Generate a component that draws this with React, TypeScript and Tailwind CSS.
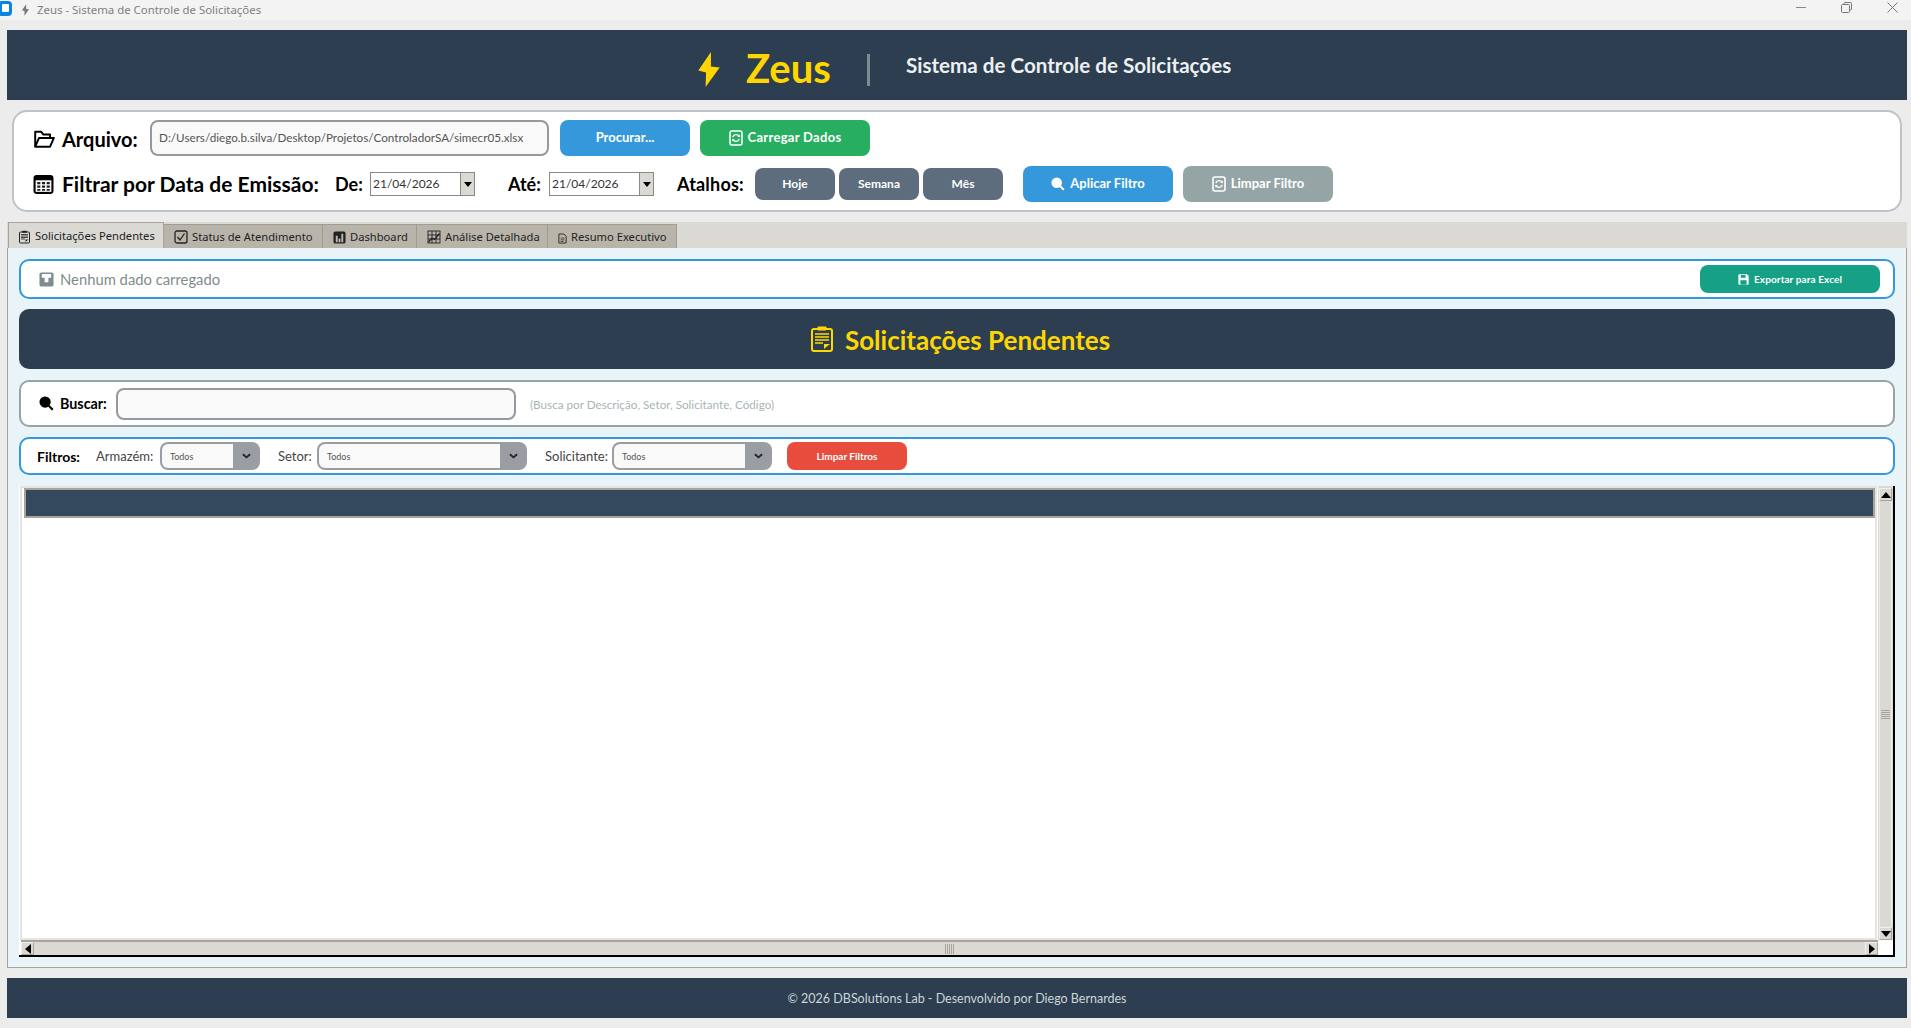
import React from "react";

const ui = "font-['Lato','Noto_Sans',sans-serif]";

type IconProps = { className?: string };

const Bolt: React.FC<IconProps> = ({ className }) => (
  <svg viewBox="0 0 22 36" className={className} fill="currentColor">
    <path d="M13 0 L0 19 L8 21 L7.5 36 L22 16 L13 15 Z" />
  </svg>
);

const FolderOpen: React.FC<IconProps> = ({ className }) => (
  <svg viewBox="0 0 20 20" className={className} fill="none" stroke="currentColor" strokeWidth="1.8" strokeLinejoin="round">
    <path d="M2 17 V3.5 H7.5 L9.5 6 H15.5 V9" />
    <path d="M2 17 L5.5 9 H19 L15.5 17 Z" />
  </svg>
);

const CalendarIcon: React.FC<IconProps> = ({ className }) => (
  <svg viewBox="0 0 20 20" className={className}>
    <rect x="0.5" y="1" width="19" height="18" rx="3" fill="#000" />
    <rect x="2.5" y="6" width="15" height="11" fill="#fff" />
    <path d="M4 7.5h3v2.2h-3zM8.5 7.5h3v2.2h-3zM13 7.5h3v2.2h-3zM4 11h3v2.2h-3zM8.5 11h3v2.2h-3zM13 11h3v2.2h-3zM4 14.4h3v1.6h-3zM8.5 14.4h3v1.6h-3zM13 14.4h3v1.6h-3z" fill="#222" />
  </svg>
);

const Magnifier: React.FC<IconProps> = ({ className }) => (
  <svg viewBox="0 0 16 16" className={className} fill="currentColor">
    <circle cx="6.5" cy="6.5" r="6" />
    <path d="M9.5 11 L11 9.5 L15.5 13.8 L13.8 15.5 Z" />
  </svg>
);

// gray variant of the floppy: a white T on a rounded square
const FloppyT: React.FC<IconProps> = ({ className }) => (
  <svg viewBox="0 0 16 16" className={className}>
    <rect x="0.5" y="0.5" width="15" height="15" rx="2" fill="currentColor" />
    <path d="M3 2 H13 V6 H10 V11 H6 V6 H3 Z" fill="#fff" />
  </svg>
);

const FloppySave: React.FC<IconProps & { hole: string }> = ({ className, hole }) => (
  <svg viewBox="0 0 16 16" className={className}>
    <path d="M1.5 0.5 H13 L15.5 3 V14 A1.5 1.5 0 0 1 14 15.5 H2 A1.5 1.5 0 0 1 0.5 14 V2 A1.5 1.5 0 0 1 1.5 0.5 Z" fill="currentColor" />
    <rect x="4" y="1.5" width="7" height="4" fill={hole} />
    <rect x="3.5" y="9" width="9" height="6.5" fill={hole} />
  </svg>
);

const RefreshDoc: React.FC<IconProps> = ({ className }) => (
  <svg viewBox="0 0 14 16" className={className}>
    <rect x="1" y="1" width="12" height="14" rx="2" fill="none" stroke="currentColor" strokeWidth="1.6" />
    <path d="M3.8 7.2 A3.3 3.3 0 0 1 10 6.5 M10.2 8.8 A3.3 3.3 0 0 1 4 9.5" fill="none" stroke="currentColor" strokeWidth="1.4" />
    <path d="M10.8 4.4 V7 H8.3 Z M3.2 11.6 V9 H5.7 Z" fill="currentColor" />
  </svg>
);

const Clipboard: React.FC<IconProps> = ({ className }) => (
  <svg viewBox="0 0 22 26" className={className} fill="none" stroke="currentColor">
    <rect x="1" y="3" width="20" height="22" rx="2" strokeWidth="2" />
    <rect x="6.5" y="0.5" width="9" height="4" rx="1" fill="currentColor" stroke="none" />
    <path d="M4 8h14M4 11h14M4 14h14M4 17h8" strokeWidth="1.6" />
    <path d="M13 23 V18 H19 Z" fill="currentColor" stroke="none" />
  </svg>
);

const CheckBox: React.FC<IconProps> = ({ className }) => (
  <svg viewBox="0 0 14 14" className={className} fill="none" stroke="currentColor" strokeWidth="1.3">
    <rect x="1" y="1" width="12" height="12" rx="2" />
    <path d="M3.5 7 L6 10 L10.5 3.5" />
  </svg>
);

const BarsIcon: React.FC<IconProps> = ({ className }) => (
  <svg viewBox="0 0 14 14" className={className}>
    <rect x="0.5" y="0.5" width="13" height="13" rx="2" fill="currentColor" />
    <path d="M3 5h2v7h-2zM6 8h2v4h-2zM9 3h2v9h-2z" fill="#bfbcb2" />
  </svg>
);

const ChartIcon: React.FC<IconProps> = ({ className }) => (
  <svg viewBox="0 0 14 14" className={className} fill="none" stroke="currentColor" strokeWidth="0.9">
    <rect x="1" y="1" width="12" height="12" />
    <path d="M1 5h12M1 9h12M5 1v12M9 1v12" />
    <path d="M1.5 12 L5 8 L7.5 9.5 L12.5 3.5" strokeWidth="1.3" />
  </svg>
);

const DocIcon: React.FC<IconProps> = ({ className }) => (
  <svg viewBox="0 0 10 12" className={className} fill="none" stroke="currentColor" strokeWidth="1">
    <path d="M1 1 H6.5 L9 3.5 V11 H1 Z" />
    <path d="M3 5.5h4M3 7.5h4M3 9.2h3" strokeWidth="0.8" />
  </svg>
);

const Chevron: React.FC = () => (
  <svg viewBox="0 0 10 6" className="w-[9px] h-[6px] text-[#222]" fill="none" stroke="currentColor" strokeWidth="2">
    <path d="M1 1 L5 4.5 L9 1" />
  </svg>
);

const Action: React.FC<{ w: string; h: string; bg: string; children: React.ReactNode; extra?: string }> = ({ w, h, bg, children, extra }) => (
  <div className={`${w} ${h} ${bg} ${extra ?? ""} rounded-lg flex items-center justify-center gap-[5px] text-white shrink-0 whitespace-nowrap`}>
    {children}
  </div>
);

const DateBox: React.FC<{ extra: string }> = ({ extra }) => (
  <div className={`${extra} w-[105px] h-[24px] border border-[#8a8a84] bg-white flex shrink-0`}>
    <div className="flex-1 pl-[2px] flex items-center text-[12px] text-[#333]">21/04/2026</div>
    <div className="w-[14px] bg-[#dad9d4] border-l border-[#8a8a84] flex items-center justify-center">
      <div className="w-0 h-0 border-x-[4px] border-x-transparent border-t-[5px] border-t-black" />
    </div>
  </div>
);

const Combo: React.FC<{ w: string }> = ({ w }) => (
  <div className={`${w} h-[28px] rounded-lg bg-[#9a9da3] p-[2px] pr-0 flex shrink-0`}>
    <div className="flex-1 bg-[#f9f9f9] rounded-l-md pl-[8px] pt-[2px] flex items-center text-[9px] text-[#555]">Todos</div>
    <div className="w-[27px] flex items-center justify-center">
      <Chevron />
    </div>
  </div>
);

const tabs = [
  { label: "Status de Atendimento", w: "w-[159px]", icon: <CheckBox className="w-[14px] h-[14px]" /> },
  { label: "Dashboard", w: "w-[94px]", icon: <BarsIcon className="w-[13px] h-[13px]" /> },
  { label: "Análise Detalhada", w: "w-[131px]", icon: <ChartIcon className="w-[14px] h-[14px]" /> },
  { label: "Resumo Executivo", w: "w-[129px]", icon: <DocIcon className="w-[9px] h-[11px] mt-[2px]" /> },
];

const Arrow: React.FC<{ dir: "up" | "down" | "left" | "right" }> = ({ dir }) => {
  const tri =
    dir === "up"
      ? "border-x-[5px] border-x-transparent border-b-[6px] border-b-black"
      : dir === "down"
        ? "border-x-[5px] border-x-transparent border-t-[6px] border-t-black"
        : dir === "left"
          ? "border-y-[5px] border-y-transparent border-r-[6px] border-r-black"
          : "border-y-[5px] border-y-transparent border-l-[6px] border-l-black";
  return (
    <div className="w-[13px] h-[13px] bg-[#dad9d4] border border-[#a8a49a] border-t-[#f2f1ee] border-l-[#f2f1ee] flex items-center justify-center shrink-0">
      <div className={`w-0 h-0 ${tri}`} />
    </div>
  );
};

export default function App() {
  return (
    <div className={`w-full h-screen overflow-hidden bg-[#ececec] flex flex-col ${ui}`}>
      {/* title bar */}
      <div className="h-5 bg-[#f3f3f3] flex items-center shrink-0 font-['Noto_Sans',sans-serif]">
        <div className="w-[14px] h-[15px] -ml-[2px] mt-[-4px] bg-[#0a84e0] rounded-[4px] flex items-center justify-center shrink-0">
          <div className="w-[7px] h-[8px] bg-white rounded-[1px]" />
        </div>
        <Bolt className="w-[7px] h-[12px] ml-[10px] text-[#777] shrink-0" />
        <span className="ml-[8px] text-[11.4px] text-[#808080] whitespace-nowrap">Zeus - Sistema de Controle de Solicitações</span>
        <div className="ml-auto flex items-start h-full text-[#777]">
          <div className="w-[10px] h-px bg-[#888] mt-[7px]" />
          <svg viewBox="0 0 11 11" className="w-[11px] h-[11px] ml-[35px] mt-[2px]" fill="none" stroke="currentColor">
            <rect x="0.5" y="2.5" width="8" height="8" rx="1" />
            <path d="M3 2.5 V1.5 A1 1 0 0 1 4 0.5 H9.5 A1 1 0 0 1 10.5 1.5 V7 A1 1 0 0 1 9.5 8 H8.5" />
          </svg>
          <svg viewBox="0 0 11 11" className="w-[11px] h-[11px] ml-[35px] mr-[13px] mt-[2px]" fill="none" stroke="currentColor">
            <path d="M0.5 0.5 L10.5 10.5 M10.5 0.5 L0.5 10.5" />
          </svg>
        </div>
      </div>

      {/* app header */}
      <div className="mt-[10px] ml-[7px] mr-[4px] h-[70px] bg-[#2c3e50] flex items-center pl-[691px] shrink-0">
        <Bolt className="w-[22px] h-[35px] text-[#ffd700] shrink-0 mt-[9px]" />
        <span className="ml-[26px] w-[121px] text-[40px] leading-none font-bold text-[#ffd700] mt-[5px]">Zeus</span>
        <div className="w-[3px] h-[32px] bg-[#7f8c8d] shrink-0 mt-[9px]" />
        <span className="ml-[36px] text-[20.6px] font-bold text-[#ecf0f1] whitespace-nowrap mt-[1px]">Sistema de Controle de Solicitações</span>
      </div>

      {/* file and date filter panel */}
      <div className="mt-[10px] ml-[12px] mr-[9px] h-[102px] border-2 border-[#bdc3c7] rounded-[15px] bg-white pt-[8px] pl-[19px] flex flex-col gap-[10px] shrink-0">
        <div className="h-[36px] flex items-center">
          <FolderOpen className="w-[22px] h-[22px] text-black shrink-0 mt-[2px]" />
          <span className="ml-[7px] w-[88px] text-[20px] font-bold text-black mt-[2px]">Arquivo:</span>
          <div className="w-[399px] h-[36px] border-2 border-[#95989e] rounded-lg bg-[#f9f9f9] flex items-center pl-[7px] text-[11.7px] text-[#555] whitespace-nowrap shrink-0">
            D:/Users/diego.b.silva/Desktop/Projetos/ControladorSA/simecr05.xlsx
          </div>
          <Action w="w-[130px]" h="h-[36px]" bg="bg-[#3498db]" extra="ml-[11px] text-[13px] font-bold">Procurar...</Action>
          <Action w="w-[170px]" h="h-[36px]" bg="bg-[#27ae60]" extra="ml-[10px] text-[13px] font-bold tracking-[0.3px]">
            <RefreshDoc className="w-[14px] h-[16px]" />
            Carregar Dados
          </Action>
        </div>
        <div className="h-[36px] flex items-center">
          <CalendarIcon className="w-[21px] h-[21px] shrink-0" />
          <span className="ml-[8px] w-[258px] text-[21px] font-bold text-black whitespace-nowrap">Filtrar por Data de Emissão:</span>
          <span className="ml-[15px] w-[27px] text-[18px] font-bold text-black">De:</span>
          <DateBox extra="ml-[8px]" />
          <span className="ml-[33px] w-[32px] text-[18px] font-bold text-black">Até:</span>
          <DateBox extra="ml-[9px]" />
          <span className="ml-[23px] w-[68px] text-[18px] font-bold text-black tracking-[0.2px]">Atalhos:</span>
          <div className="ml-[10px] flex gap-[4px]">
            <Action w="w-[80px]" h="h-[32px]" bg="bg-[#5d6d7e]" extra="text-[12px] font-bold">Hoje</Action>
            <Action w="w-[80px]" h="h-[32px]" bg="bg-[#5d6d7e]" extra="text-[12px] font-bold">Semana</Action>
            <Action w="w-[80px]" h="h-[32px]" bg="bg-[#5d6d7e]" extra="text-[12px] font-bold">Mês</Action>
          </div>
          <Action w="w-[150px]" h="h-[36px]" bg="bg-[#3498db]" extra="ml-[20px] text-[13px] font-bold">
            <Magnifier className="w-[14px] h-[14px]" />
            Aplicar Filtro
          </Action>
          <Action w="w-[150px]" h="h-[36px]" bg="bg-[#95a5a6]" extra="ml-[10px] text-[13px] font-bold">
            <RefreshDoc className="w-[14px] h-[16px]" />
            Limpar Filtro
          </Action>
        </div>
      </div>

      {/* notebook */}
      <div className="mt-[10px] ml-[7px] mr-[4px] flex flex-col shrink-0">
        <div className="h-[26px] bg-[#dad9d4] flex items-end font-['Noto_Sans',sans-serif] text-[11.2px] text-[#222]">
          <div className="w-[156px] ml-px h-[26px] pt-[2px] bg-[#dad9d4] border border-b-0 border-[#a8a49a] flex items-center pl-[10px] gap-[5px] whitespace-nowrap">
            <Clipboard className="w-[11px] h-[14px]" />
            Solicitações Pendentes
          </div>
          {tabs.map((t) => (
            <div key={t.label} className={`${t.w} h-[24px] pt-px bg-[#b8b4aa] border-t border-r border-[#a09c92] flex items-center pl-[10px] gap-[4px] whitespace-nowrap`}>
              {t.icon}
              {t.label}
            </div>
          ))}
        </div>
        <div className="h-[720px] border border-[#a8a49a] border-t-0 bg-[#e8f4f8] px-[11px] pt-[11px] flex flex-col">
          {/* status */}
          <div className="h-[40px] border-2 border-[#3498db] rounded-[10px] bg-white flex items-center pl-[18px] pr-[13px] shrink-0">
            <FloppyT className="w-[15px] h-[15px] text-[#7f8c8d]" />
            <span className="ml-[6px] text-[14.8px] text-[#7f8c8d] whitespace-nowrap">Nenhum dado carregado</span>
            <Action w="w-[180px]" h="h-[28px]" bg="bg-[#16a085]" extra="ml-auto text-[10px] font-bold tracking-[0.1px]">
              <FloppySave className="w-[11px] h-[11px] text-white" hole="#16a085" />
              Exportar para Excel
            </Action>
          </div>

          {/* banner */}
          <div className="mt-[10px] h-[60px] bg-[#2c3e50] rounded-[10px] flex items-center justify-center gap-[12px] pl-[7px] text-[#ffd700] shrink-0">
            <Clipboard className="w-[22px] h-[26px]" />
            <span className="text-[26px] font-bold leading-none whitespace-nowrap mt-[2px]">Solicitações Pendentes</span>
          </div>

          {/* search */}
          <div className="mt-[11px] h-[47px] border-2 border-[#95a5a6] rounded-[10px] bg-white flex items-center pl-[18px] shrink-0">
            <Magnifier className="w-[15px] h-[15px] text-black" />
            <span className="ml-[6px] text-[14.3px] font-bold text-black w-[56px]">Buscar:</span>
            <div className="w-[400px] h-[32px] border-2 border-[#95989e] rounded-lg bg-[#f9f9f9] shrink-0" />
            <span className="ml-[14px] text-[11.7px] text-[#a9b4b6] whitespace-nowrap mt-[2px]">(Busca por Descrição, Setor, Solicitante, Código)</span>
          </div>

          {/* filters */}
          <div className="mt-[10px] h-[38px] border-2 border-[#3498db] rounded-[10px] bg-white flex items-center pl-[16px] shrink-0">
            <span className="w-[59px] text-[14px] font-bold text-black">Filtros:</span>
            <span className="w-[64px] text-[13px] text-[#444] whitespace-nowrap mt-[2px]">Armazém:</span>
            <Combo w="w-[100px]" />
            <span className="ml-[18px] w-[39px] text-[13px] text-[#444] mt-[2px]">Setor:</span>
            <Combo w="w-[210px]" />
            <span className="ml-[18px] w-[67px] text-[13px] text-[#444] mt-[2px]">Solicitante:</span>
            <Combo w="w-[160px]" />
            <Action w="w-[120px]" h="h-[28px]" bg="bg-[#e74c3c]" extra="ml-[15px] text-[10px] font-bold">Limpar Filtros</Action>
          </div>

          {/* table */}
          <div className="mt-[11px] h-[471px] border-r-2 border-b-2 border-black bg-white flex flex-col shrink-0">
            <div className="h-[454px] flex">
              <div className="flex-1 border-2 border-[#e6e4de] flex flex-col ml-px mr-px">
                <div className="ml-[2px] h-[30px] border-2 border-[#a8a49a] bg-[#34495e] shrink-0" />
              </div>
              <div className="w-[15px] pt-[2px] bg-[#dad9d4] flex flex-col items-center shrink-0">
                <Arrow dir="up" />
                <div className="flex-1 w-[13px] border-x border-[#eeedea] flex flex-col items-center justify-center gap-px">
                  {[0, 1, 2, 3, 4].map((i) => (
                    <div key={i} className="w-[9px] h-px bg-[#a8a49a]" />
                  ))}
                </div>
                <Arrow dir="down" />
              </div>
            </div>
            <div className="h-[15px] flex shrink-0">
              <div className="flex-1 ml-[2px] border-t-2 border-[#a8a49a] bg-[#dad9d4] flex items-center">
                <Arrow dir="left" />
                <div className="flex-1 h-[13px] flex items-center justify-center gap-px">
                  {[0, 1, 2, 3, 4].map((i) => (
                    <div key={i} className="w-px h-[10px] bg-[#a8a49a]" />
                  ))}
                </div>
                <Arrow dir="right" />
              </div>
              <div className="w-[15px] shrink-0 bg-white" />
            </div>
          </div>
        </div>
      </div>

      {/* footer */}
      <div className="mt-[10px] ml-[7px] mr-[4px] h-[40px] pt-[2px] bg-[#2c3e50] flex items-center justify-center text-[12.5px] text-[#ccd5d9] shrink-0">
        © 2026 DBSolutions Lab - Desenvolvido por Diego Bernardes
      </div>
    </div>
  );
}
